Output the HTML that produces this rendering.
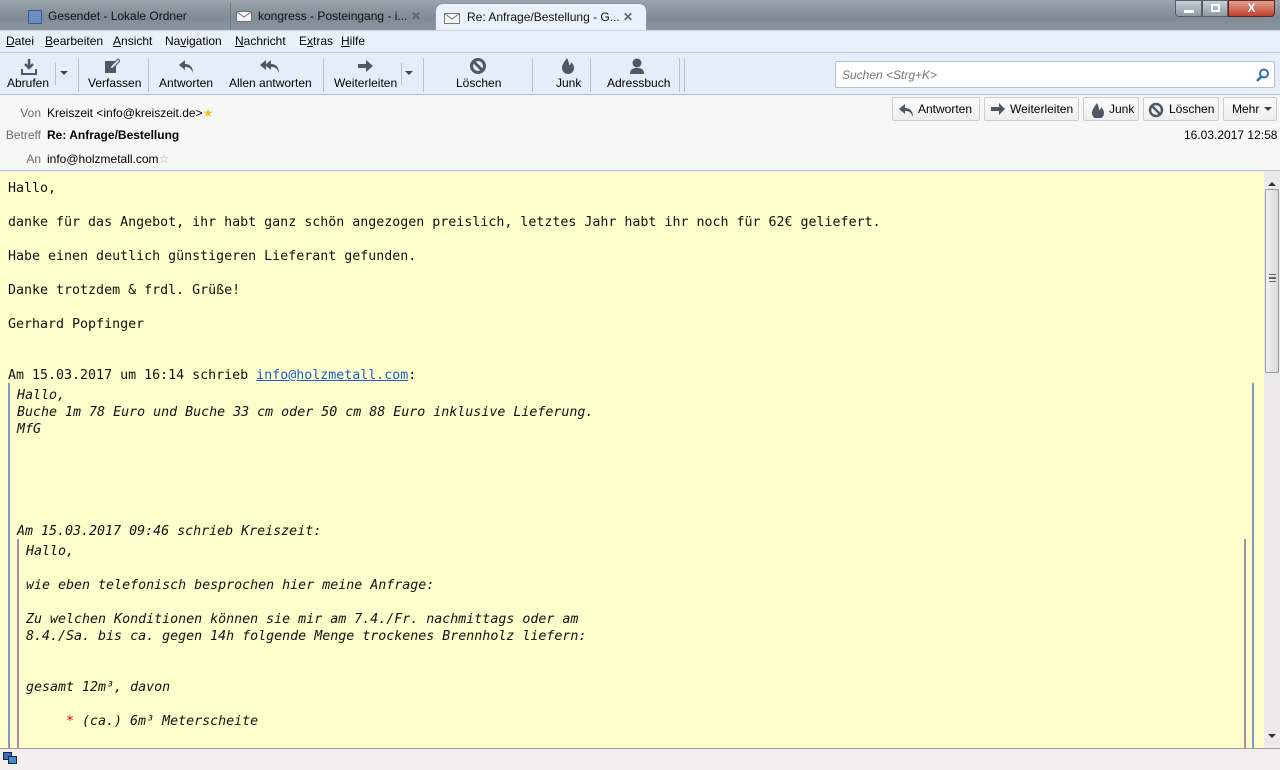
<!DOCTYPE html>
<html style="overflow:hidden"><head><meta charset="utf-8">
<style>
*{box-sizing:border-box;margin:0;padding:0}
html,body{width:1280px;height:770px;overflow:hidden}
body{position:relative;font-family:"Liberation Sans",sans-serif;font-size:12px;color:#000;background:#f0eeee}
.abs{position:absolute}
#title{left:0;top:0;width:1280px;height:30px;background:linear-gradient(#9aa5ac,#7e8c95 60%,#8a969d)}
.tab{position:absolute;top:3px;height:27px;line-height:26px;font-size:12px;color:#111;padding-left:40px;white-space:nowrap}
#menu{left:0;top:30px;width:1280px;height:22px;background:#e8f0f9;border-top:1px solid #c7d4e3}
#menu span{position:absolute;top:3px;font-size:12px}
#tb{left:0;top:52px;width:1280px;height:43px;background:#e5eef8;border-top:1px solid #bccadb;border-bottom:1px solid #a9bccf}
.tbb{position:absolute;top:23px;font-size:12px;text-align:center;white-space:nowrap}
.sep{position:absolute;top:5px;width:1px;height:34px;background:#b6c3d1}
#hdr{left:0;top:95px;width:1280px;height:76px;background:#f7f7f7;border-bottom:1px solid #b7c4d4}
.lbl{position:absolute;color:#6b6b6b;font-size:12px;text-align:right}
.hb{position:absolute;top:2px;height:24px;border:1px solid #cdcdcd;border-radius:2px;background:linear-gradient(#fbfbfb,#eeeeee);font-size:12px;line-height:22px;padding-left:25px;padding-right:6px;white-space:nowrap}
#body{left:0;top:172px;width:1264px;height:576px;background:#ffffcc;overflow:hidden;font-family:"DejaVu Sans Mono","Liberation Mono",monospace;font-size:13.3px;line-height:17px;color:#111}
.l{position:absolute;white-space:pre}
i.l{font-style:oblique}
#sb{left:1264px;top:172px;width:16px;height:576px;background:#eceaea}
#status{left:0;top:748px;width:1280px;height:22px;background:#f0eeee;border-top:1px solid #9a9a9a}
</style></head><body>
<div id="title" class="abs">
 <div class="tab" style="left:8px;width:215px"><span class="abs" style="left:20px;top:7px;width:14px;height:14px;background:#6a8fc4;border:1px solid #3a5b8c"></span>Gesendet - Lokale Ordner</div>
 <div class="tab" style="left:230px;width:205px;border-left:1px solid #6d7a83;padding-left:27px"><svg class="abs" style="left:5px;top:8px" width="16" height="11"><rect x=".5" y=".5" width="15" height="10" fill="#f4f4f4" stroke="#777"/><path d="M1 1l7 5 7-5" stroke="#777" fill="none"/></svg>kongress - Posteingang - i...<span class="abs" style="left:180px;color:#666;font-weight:bold">✕</span></div>
 <div class="tab" style="left:435px;top:3px;width:212px;background:#e8f0f9;border-radius:8px 8px 0 0;border:1px solid #8a98a4;border-bottom:none;padding-left:31px"><svg class="abs" style="left:8px;top:9px" width="16" height="11"><rect x=".5" y=".5" width="15" height="10" fill="#f4f4f4" stroke="#777"/><path d="M1 1l7 5 7-5" stroke="#777" fill="none"/></svg>Re: Anfrage/Bestellung - G...<span class="abs" style="left:187px;color:#666;font-weight:bold">✕</span></div>
 <div class="abs" style="left:1175px;top:0;width:27px;height:17px;background:linear-gradient(#c8d0d6,#8d99a2);border:1px solid #545e66;border-radius:0 0 0 4px"><div class="abs" style="left:8px;top:9px;width:10px;height:3px;background:#fff"></div></div>
 <div class="abs" style="left:1202px;top:0;width:26px;height:17px;background:linear-gradient(#c8d0d6,#8d99a2);border:1px solid #545e66"><div class="abs" style="left:8px;top:3px;width:9px;height:8px;border:2px solid #fff"></div></div>
 <div class="abs" style="left:1228px;top:0;width:47px;height:17px;background:linear-gradient(#e0a090,#c0402a);border:1px solid #5a2a22;border-radius:0 0 4px 0;color:#fff;font-weight:bold;text-align:center;font-size:12px;line-height:14px">X</div>
</div>
<div id="menu" class="abs">
 <span style="left:6px"><u>D</u>atei</span><span style="left:45px"><u>B</u>earbeiten</span><span style="left:113px"><u>A</u>nsicht</span><span style="left:165px">Na<u>v</u>igation</span><span style="left:235px"><u>N</u>achricht</span><span style="left:299px">E<u>x</u>tras</span><span style="left:341px"><u>H</u>ilfe</span>
</div>
<div id="tb" class="abs">
 <svg class="abs" style="left:20px;top:5px" width="18" height="18"><path d="M9 1v8M5 6l4 4 4-4" stroke="#4d5a66" stroke-width="2.5" fill="none"/><path d="M2 11v5h14v-5" stroke="#4d5a66" stroke-width="2" fill="none"/></svg>
 <div class="tbb" style="left:7px">Abrufen</div>
 <div class="sep" style="left:55px;top:10px;height:22px"></div>
 <div class="abs" style="left:60px;top:18px;border:4px solid transparent;border-top:4px solid #444"></div>
 <div class="sep" style="left:78px"></div>
 <svg class="abs" style="left:104px;top:5px" width="16" height="16"><rect x="1" y="3" width="11" height="12" fill="#4d5a66"/><path d="M6 11l1-3 7-7 2 2-7 7z" fill="#e5eef8" stroke="#4d5a66"/></svg>
 <div class="tbb" style="left:88px">Verfassen</div>
 <div class="sep" style="left:148px"></div>
 <svg class="abs" style="left:178px;top:5px" width="18" height="18"><path d="M7 2L1 7l6 5V9c4 0 6 1 8 6 0-6-3-9-8-9z" fill="#4d5a66"/></svg>
 <div class="tbb" style="left:159px">Antworten</div>
 <svg class="abs" style="left:260px;top:5px" width="22" height="18"><path d="M6 2L0 7l6 5z" fill="#4d5a66"/><path d="M11 2L5 7l6 5V9c4 0 6 1 8 6 0-6-3-9-8-9z" fill="#4d5a66"/></svg>
 <div class="tbb" style="left:229px">Allen antworten</div>
 <div class="sep" style="left:323px"></div>
 <svg class="abs" style="left:357px;top:6px" width="18" height="16"><path d="M1 5h8V1l7 6-7 6V9H1z" fill="#4d5a66"/></svg>
 <div class="tbb" style="left:334px">Weiterleiten</div>
 <div class="sep" style="left:401px;top:10px;height:22px"></div>
 <div class="abs" style="left:405px;top:18px;border:4px solid transparent;border-top:4px solid #444"></div>
 <div class="sep" style="left:423px"></div>
 <svg class="abs" style="left:469px;top:4px" width="18" height="18"><circle cx="9" cy="9" r="6.5" stroke="#4d5a66" stroke-width="3" fill="none"/><path d="M4.5 4.5l9 9" stroke="#4d5a66" stroke-width="3"/></svg>
 <div class="tbb" style="left:456px">Löschen</div>
 <div class="sep" style="left:532px"></div>
 <svg class="abs" style="left:561px;top:4px" width="14" height="18"><path d="M6 1c-3 4-5 7-5 10a6 6 0 0012 0c0-3-2-5-3-6 0 2-1 3-2 3 0-3-1-5-2-7z" fill="#4d5a66"/></svg>
 <div class="tbb" style="left:556px">Junk</div>
 <div class="sep" style="left:590px"></div>
 <svg class="abs" style="left:628px;top:4px" width="18" height="18"><circle cx="9" cy="6" r="4.5" fill="#4d5a66"/><path d="M2 17c0-5 3-6 7-6s7 1 7 6z" fill="#4d5a66"/></svg>
 <div class="tbb" style="left:607px">Adressbuch</div>
 <div class="sep" style="left:679px"></div><div class="sep" style="left:684px"></div>
 <div class="abs" style="left:835px;top:8px;width:440px;height:27px;background:#fff;border:1px solid #b3c0cf;border-radius:2px"><span class="abs" style="left:6px;top:6px;color:#777;font-style:italic">Suchen &lt;Strg+K&gt;</span><svg class="abs" style="left:420px;top:6px" width="14" height="14"><circle cx="8" cy="5.5" r="4" stroke="#2f6fb8" stroke-width="2" fill="none"/><path d="M5 9l-4 4" stroke="#2f6fb8" stroke-width="2.5"/></svg></div>
</div>
<div id="hdr" class="abs">
 <div class="lbl" style="left:0;width:41px;top:11px">Von</div>
 <div class="abs" style="left:47px;top:11px">Kreiszeit &lt;info@kreiszeit.de&gt;<span style="color:#f0c030">★</span></div>
 <div class="lbl" style="left:0;width:41px;top:33px">Betreff</div>
 <div class="abs" style="left:47px;top:33px;font-weight:bold">Re: Anfrage/Bestellung</div>
 <div class="lbl" style="left:0;width:41px;top:57px">An</div>
 <div class="abs" style="left:47px;top:57px">info@holzmetall.com<span style="color:#aaa">☆</span></div>
 <div class="hb" style="left:892px;width:88px"><svg class="abs" style="left:5px;top:4px" width="16" height="16"><path d="M7 2L1 7l6 5V9c4 0 6 1 8 6 0-6-3-9-8-9z" fill="#4d5a66"/></svg>Antworten</div>
 <div class="hb" style="left:984px;width:95px"><svg class="abs" style="left:5px;top:5px" width="16" height="14"><path d="M1 4h8V0l6 6-6 6V8H1z" fill="#4d5a66"/></svg>Weiterleiten</div>
 <div class="hb" style="left:1083px;width:56px"><svg class="abs" style="left:7px;top:4px" width="14" height="16"><path d="M6 1c-3 4-5 7-5 10a6 6 0 0012 0c0-3-2-5-3-6 0 2-1 3-2 3 0-3-1-5-2-7z" fill="#4d5a66"/></svg>Junk</div>
 <div class="hb" style="left:1143px;width:76px"><svg class="abs" style="left:4px;top:4px" width="16" height="16"><circle cx="8" cy="8" r="6" stroke="#4d5a66" stroke-width="2.5" fill="none"/><path d="M4 4l8 8" stroke="#4d5a66" stroke-width="2.5"/></svg>Löschen</div>
 <div class="hb" style="left:1223px;width:54px;padding-left:8px">Mehr<span class="abs" style="left:40px;top:9px;border:4px solid transparent;border-top:4px solid #444"></span></div>
 <div class="abs" style="left:1184px;top:33px;white-space:nowrap;width:90px;text-align:right">16.03.2017 12:58</div>
</div>
<div id="body" class="abs">
 <div class="l" style="left:8px;top:8px">Hallo,</div>
 <div class="l" style="left:8px;top:42px">danke für das Angebot, ihr habt ganz schön angezogen preislich, letztes Jahr habt ihr noch für 62€ geliefert.</div>
 <div class="l" style="left:8px;top:76px">Habe einen deutlich günstigeren Lieferant gefunden.</div>
 <div class="l" style="left:8px;top:110px">Danke trotzdem &amp; frdl. Grüße!</div>
 <div class="l" style="left:8px;top:144px">Gerhard Popfinger</div>
 <div class="l" style="left:8px;top:195px">Am 15.03.2017 um 16:14 schrieb <span style="color:#1a5fd0;text-decoration:underline">info@holzmetall.com</span>:</div>
 <div class="abs" style="left:8px;top:211px;width:2px;height:400px;background:#7b9bd0"></div>
 <div class="abs" style="left:1252px;top:211px;width:2px;height:400px;background:#7b9bd0"></div>
 <i class="l" style="left:17px;top:215px">Hallo,</i>
 <i class="l" style="left:17px;top:232px">Buche 1m 78 Euro und Buche 33 cm oder 50 cm 88 Euro inklusive Lieferung.</i>
 <i class="l" style="left:17px;top:249px">MfG</i>
 <i class="l" style="left:17px;top:351px">Am 15.03.2017 09:46 schrieb Kreiszeit:</i>
 <div class="abs" style="left:17px;top:367px;width:2px;height:300px;background:#b088a8"></div>
 <div class="abs" style="left:1244px;top:367px;width:2px;height:300px;background:#b088a8"></div>
 <i class="l" style="left:26px;top:371px">Hallo,</i>
 <i class="l" style="left:26px;top:405px">wie eben telefonisch besprochen hier meine Anfrage:</i>
 <i class="l" style="left:26px;top:439px">Zu welchen Konditionen können sie mir am 7.4./Fr. nachmittags oder am</i>
 <i class="l" style="left:26px;top:456px">8.4./Sa. bis ca. gegen 14h folgende Menge trockenes Brennholz liefern:</i>
 <i class="l" style="left:26px;top:507px">gesamt 12m³, davon</i>
 <i class="l" style="left:66px;top:541px"><span style="color:#c00">*</span> (ca.) 6m³ Meterscheite</i>
</div>
<div id="sb" class="abs">
 <div class="abs" style="left:4px;top:6px;border:4px solid transparent;border-bottom:4px solid #333"></div>
 <div class="abs" style="left:1px;top:17px;width:14px;height:184px;background:linear-gradient(90deg,#f2f2f2,#d8d8d8);border:1px solid #999;border-radius:2px"><div class="abs" style="left:3px;top:84px;width:7px;height:8px;border-top:1px solid #666;border-bottom:1px solid #666"><div style="margin-top:2px;border-top:1px solid #666;height:2px;border-bottom:1px solid #666"></div></div></div>
 <div class="abs" style="left:4px;top:562px;border:4px solid transparent;border-top:4px solid #333"></div>
</div>
<div id="status" class="abs">
 <div class="abs" style="left:3px;top:3px;width:9px;height:8px;background:#3a6fc0;border:1px solid #224"></div>
 <div class="abs" style="left:8px;top:7px;width:9px;height:8px;background:#3a8fd0;border:1px solid #224"></div>
</div>
</body></html>
